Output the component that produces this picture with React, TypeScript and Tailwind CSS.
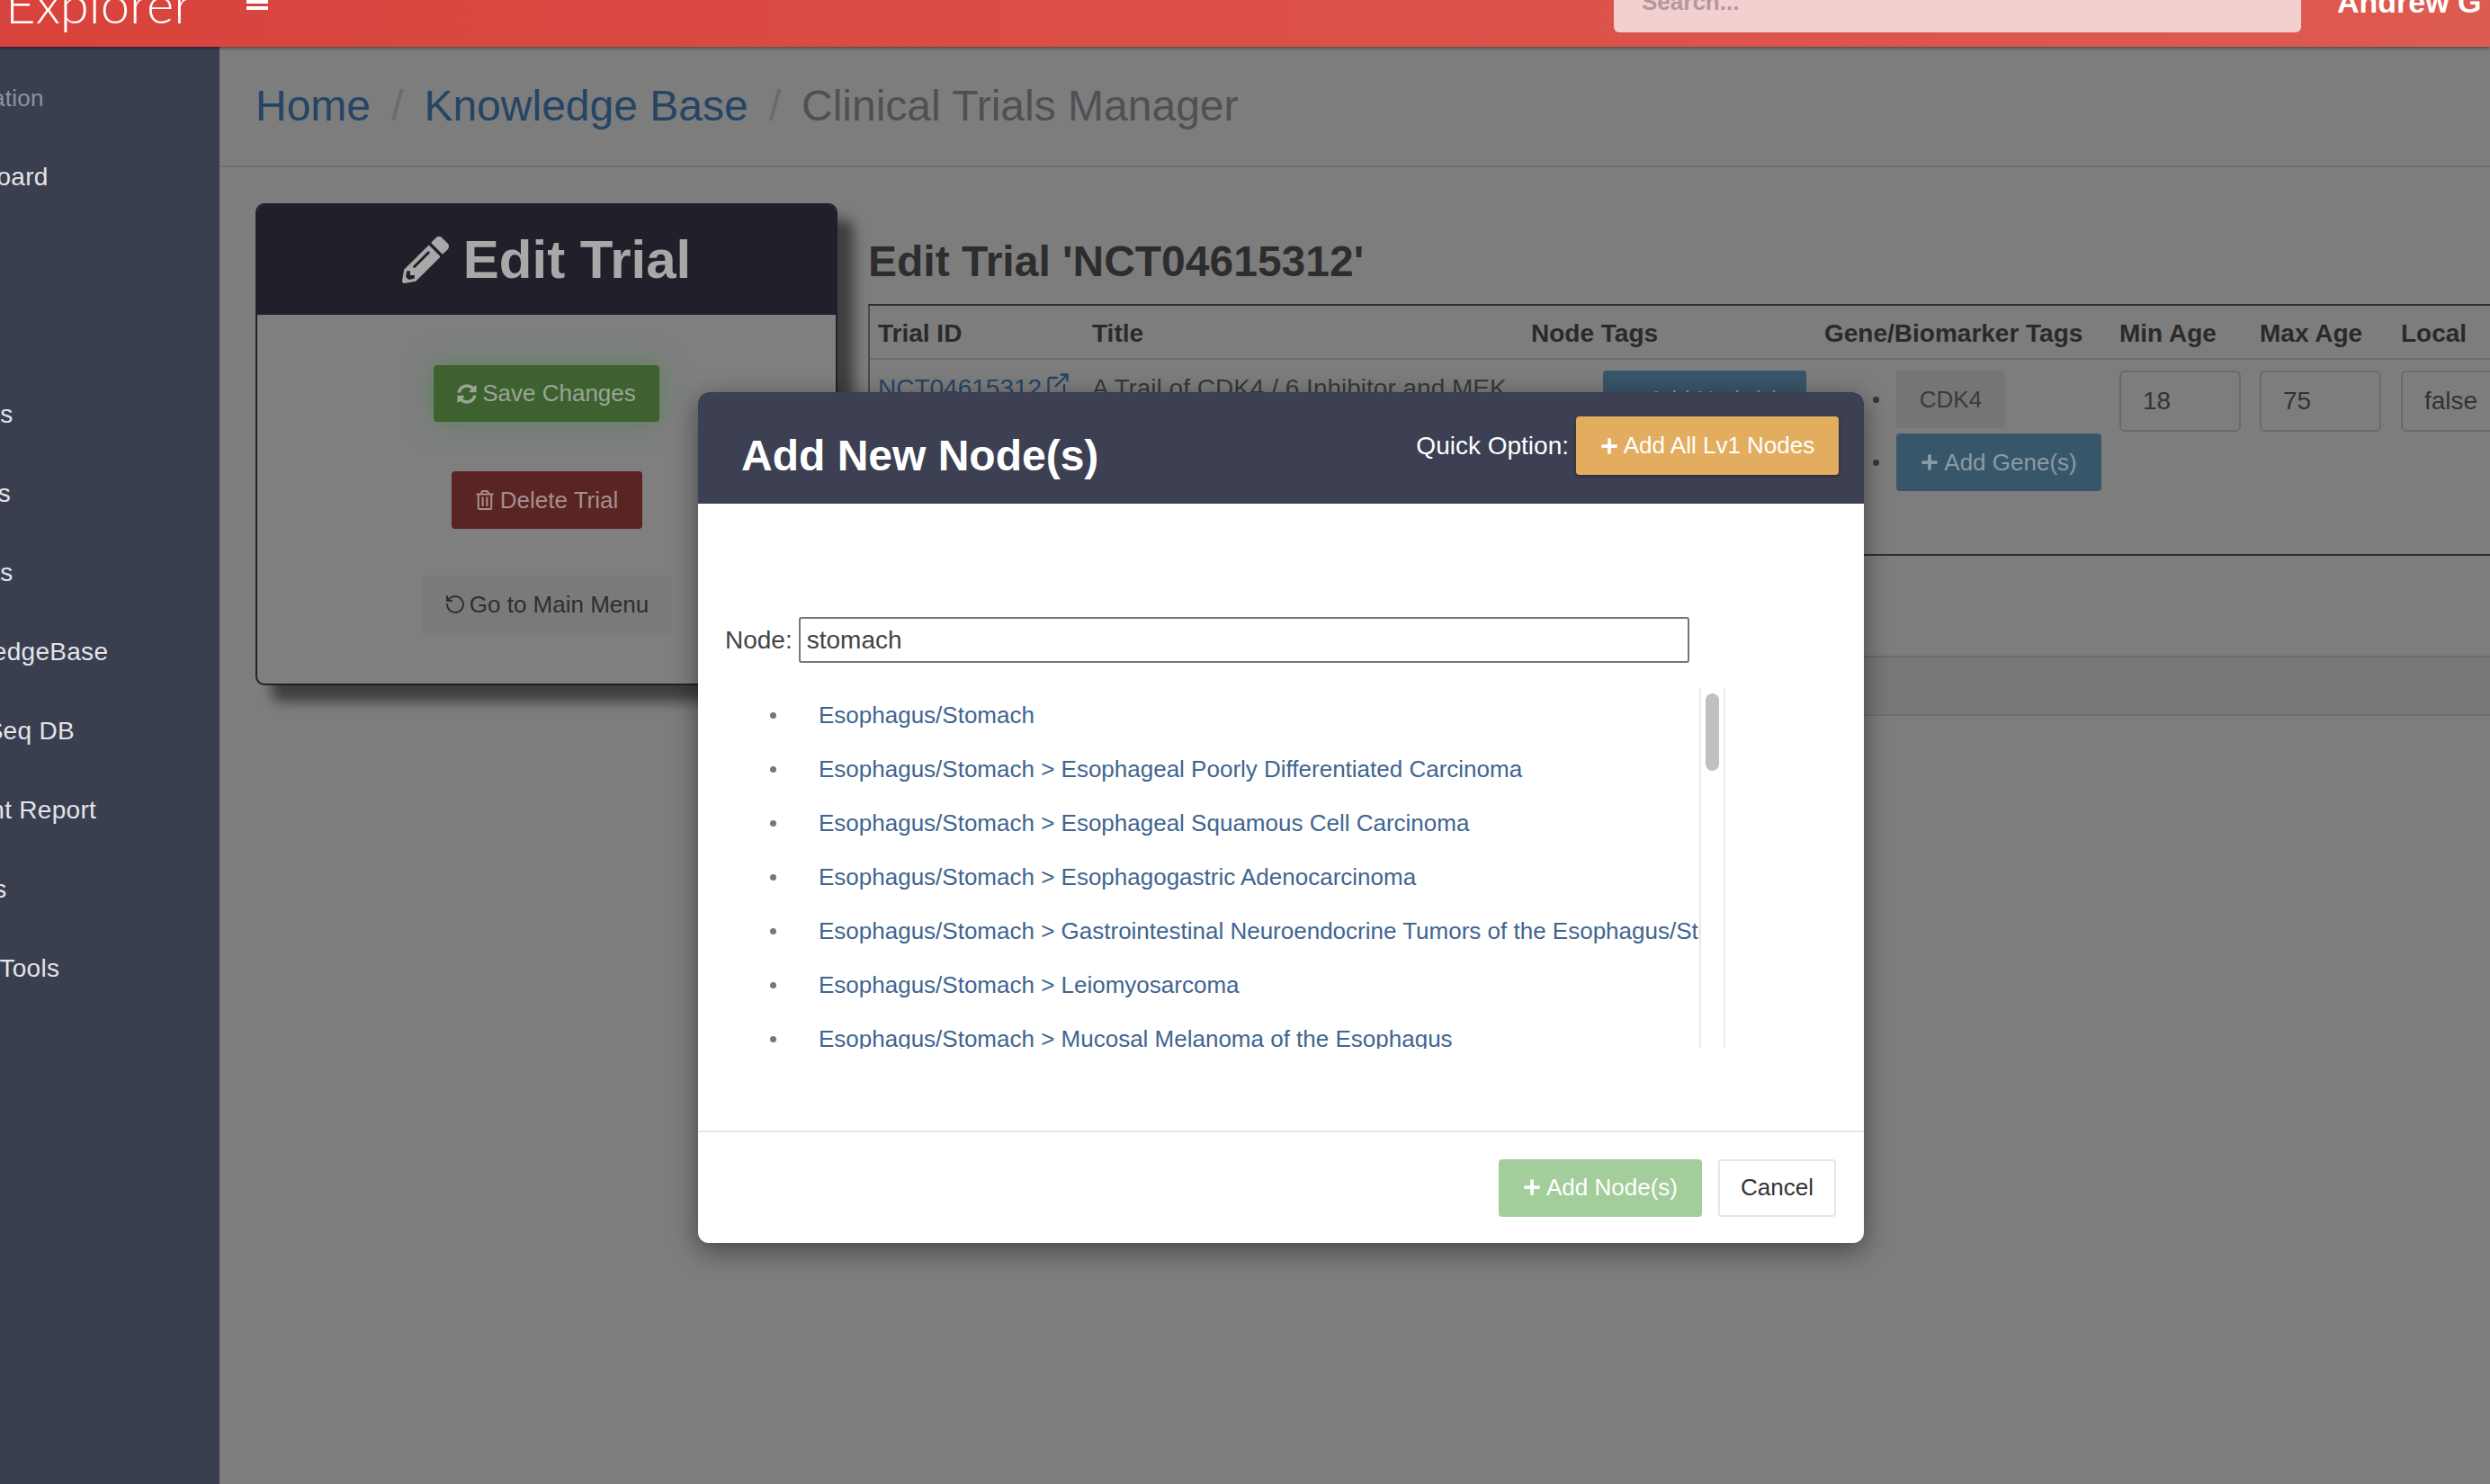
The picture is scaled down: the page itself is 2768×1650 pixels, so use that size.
import { ExternalLink, RotateCcw } from 'lucide-react'
import { FaPencilAlt, FaPlus, FaRegTrashAlt, FaSyncAlt } from 'react-icons/fa'

const NAV = [
  { label: 'Dashboard', className: 'mt-[40px] pl-[130px]' },
  { label: '', className: 'mt-[20px] pl-[130px]' },
  { label: '', className: 'mt-[20px] pl-[130px]' },
  { label: 'Patients', className: 'mt-[20px] pl-[127px]' },
  { label: 'Variants', className: 'mt-[20px] pl-[125px]' },
  { label: 'Projects', className: 'mt-[20px] pl-[127px]' },
  { label: 'KnowledgeBase', className: 'mt-[20px] pl-[130px]' },
  { label: 'RNA-Seq DB', className: 'mt-[20px] pl-[131px]' },
  { label: 'Patient Report', className: 'mt-[20px] pl-[140px]' },
  { label: 'Groups', className: 'mt-[20px] pl-[130px]' },
  { label: 'Admin Tools', className: 'mt-[20px] pl-[127px]' },
]

const NODES = [
  'Esophagus/Stomach',
  'Esophagus/Stomach > Esophageal Poorly Differentiated Carcinoma',
  'Esophagus/Stomach > Esophageal Squamous Cell Carcinoma',
  'Esophagus/Stomach > Esophagogastric Adenocarcinoma',
  'Esophagus/Stomach > Gastrointestinal Neuroendocrine Tumors of the Esophagus/Stomach',
  'Esophagus/Stomach > Leiomyosarcoma',
  'Esophagus/Stomach > Mucosal Melanoma of the Esophagus',
]

const COLUMNS = ['Trial ID', 'Title', 'Node Tags', 'Gene/Biomarker Tags', 'Min Age', 'Max Age', 'Local']

const GRID = 'grid grid-cols-[238px_488px_326px_328px_156px_157px_220px]'

function Bullet({ className }: { className: string }) {
  return <span className={`block w-[7px] h-[7px] rounded-full shrink-0 ${className}`} />
}

function AddNodeModal() {
  return (
    <div className="absolute left-[776px] top-[436px] w-[1296px] h-[946px] bg-white rounded-[12px] overflow-hidden shadow-[0_8px_30px_rgba(0,0,0,0.45)]">
      <div className="h-[124px] bg-[#3c4052] pl-[48px] pr-[28px] flex justify-between">
        <h2 className="text-[48px] leading-[55px] font-bold text-white pt-[43px] box-content">Add New Node(s)</h2>
        <div className="flex items-center gap-[8px] pt-[27px] self-start">
          <span className="text-[28px] text-white">Quick Option:</span>
          <button className="w-[292px] h-[65px] bg-[#e3ad60] rounded-[4px] text-white text-[26px] flex items-center justify-center gap-[6px] shadow-[0_2px_4px_rgba(0,0,0,0.35)]">
            <FaPlus className="w-[20px] h-[20px]" /> Add All Lv1 Nodes
          </button>
        </div>
      </div>

      <div className="h-[697px] pt-[126px] pl-[30px]">
        <div className="flex items-center gap-[7px]">
          <label className="text-[28px] text-[#444]">Node:</label>
          <div className="w-[990px] h-[51px] border-2 border-[#777] rounded-[3px] pl-[7px] flex items-center text-[28px] text-[#444]">stomach</div>
        </div>
        <div className="flex mt-[28px] h-[401px]">
          <ul className="w-[1083px] overflow-hidden">
            {NODES.map(node => (
              <li key={node} className="flex items-center h-[60px] pl-[50px] gap-[47px] whitespace-nowrap text-[26px] text-[#3f6590]">
                <Bullet className="bg-[#777]" />
                {node}
              </li>
            ))}
          </ul>
          <div className="w-[29px] border-x-2 border-[#eaeaea] px-[5px] pt-[6px]">
            <div className="h-[86px] bg-[#c1c1c1] rounded-full" />
          </div>
        </div>
      </div>

      <div className="h-[125px] border-t-2 border-[#e6e6e6] pt-[30px] pr-[31px] flex justify-end gap-[18px]">
        <button className="w-[226px] h-[64px] bg-[#a3cd9b] rounded-[4px] text-white text-[26px] flex items-center justify-center gap-[6px] pb-[2px]">
          <FaPlus className="w-[20px] h-[20px]" /> Add Node(s)
        </button>
        <button className="w-[131px] h-[64px] bg-white border-2 border-[#e6e6e6] rounded-[4px] text-[#333] text-[26px] pb-[2px]">Cancel</button>
      </div>
    </div>
  )
}

function TrialTable() {
  return (
    <div className="w-[1913px] border-t-2 border-[#2f2f2f] border-l-2 border-l-[#4a4a4b] text-[28px]">
      <div className={`${GRID} h-[60px] items-center border-b-2 border-[#6b6b6c] font-bold text-[#2a2a2a] pt-[3px]`}>
        {COLUMNS.map(col => (
          <div key={col} className="pl-[9px] whitespace-nowrap">{col}</div>
        ))}
      </div>
      <div className={`${GRID} h-[218px] border-b-2 border-[#2f2f2f] text-[#38383a]`}>
        <div className="pl-[9px] pt-[11px] flex items-start gap-[4px] text-[#264464] whitespace-nowrap">
          NCT04615312
          <ExternalLink className="w-[28px] h-[28px] mt-[2px]" />
        </div>
        <div className="pl-[9px] pt-[11px] whitespace-nowrap">A Trail of CDK4 / 6 Inhibitor and MEK</div>
        <div className="pl-[89px] pt-[12px]">
          <button className="w-[226px] h-[64px] bg-[#38566a] rounded-[4px] text-[#8a9ba4] text-[26px]">+ Add Node(s)</button>
        </div>
        <ul className="pl-[63px] pt-[12px] flex flex-col gap-[6px]">
          <li className="flex items-center gap-[19px]">
            <Bullet className="bg-[#38383a]" />
            <span className="w-[121px] h-[64px] bg-[#757576] rounded-[4px] flex items-center justify-center text-[26px] text-[#3a3a3b]">CDK4</span>
          </li>
          <li className="flex items-center gap-[19px]">
            <Bullet className="bg-[#38383a]" />
            <button className="w-[228px] h-[64px] bg-[#38566a] rounded-[4px] text-[#8a9ba4] text-[26px] flex items-center justify-center gap-[6px]">
              <FaPlus className="w-[20px] h-[20px]" /> Add Gene(s)
            </button>
          </li>
        </ul>
        {['18', '75', 'false'].map(value => (
          <div key={value} className="pl-[9px] pt-[12px]">
            <div className="w-[135px] h-[68px] border-2 border-[#6a6a6b] rounded-[6px] pl-[24px] flex items-center text-[#333]">{value}</div>
          </div>
        ))}
      </div>
      <div className="h-[113px] border-b-2 border-[#6b6b6c]" />
      <div className="h-[65px] border-b-2 border-[#6f6f70] bg-[#787879]" />
    </div>
  )
}

export default function App() {
  return (
    <div className="relative w-[2768px] h-[1650px] overflow-hidden font-['Liberation_Sans',Arial,sans-serif]">
      {/* the page is scrolled: the first 216px / 48px sit off screen */}
      <div className="w-[2984px] h-[1698px] -ml-[216px] -mt-[48px] flex flex-col">
        <header className="h-[100px] shrink-0 flex bg-gradient-to-r from-[#d8403a] to-[#de5b51] shadow-[0_2px_3px_rgba(0,0,0,0.35)] relative">
          <div className="w-[460px] pl-[222px] pt-[22px] text-[58px] leading-[60px] font-['Lato',sans-serif] font-light text-white whitespace-nowrap">Explorer</div>
          <div className="ml-[30px] w-[24px] pt-[41px] flex flex-col gap-[3px]">
            <span className="block h-[4px] bg-white" />
            <span className="block h-[4px] bg-white" />
            <span className="block h-[4px] bg-white" />
          </div>
          <div className="ml-auto mt-[16px] w-[764px] h-[68px] bg-[#f4cfcf] rounded-[6px] pl-[31px] flex items-center text-[26px] font-bold text-[#b3989c]">Search...</div>
          <div className="ml-[40px] w-[170px] flex items-center text-[34px] font-bold text-white whitespace-nowrap overflow-hidden">Andrew G</div>
        </header>

        <div className="flex-1 flex min-h-0">
          <aside className="w-[460px] shrink-0 bg-[#3a3f50] text-[28px] tracking-[0.3px] text-[#e3e4e8] pt-[43px]">
            <div className="pl-[139px] h-[28px] leading-[28px] text-[26px] text-[#8f93a0]">Navigation</div>
            {NAV.map((item, i) => (
              <div key={i} className={`h-[68px] leading-[68px] whitespace-nowrap ${item.className}`}>{item.label}</div>
            ))}
          </aside>

          <main className="flex-1 min-w-0 overflow-hidden bg-[#7d7d7e]">
            <nav className="h-[134px] border-b-2 border-[#6f6f70] pl-[40px] flex items-center gap-[23px] text-[48px] pb-[1px]">
              <span className="text-[#264464]">Home</span>
              <span className="text-[#6b6b6c]">/</span>
              <span className="text-[#264464]">Knowledge Base</span>
              <span className="text-[#6b6b6c]">/</span>
              <span className="text-[#505052]">Clinical Trials Manager</span>
            </nav>

            <div className="flex pl-[40px] pt-[40px]">
              <section className="w-[647px] h-[536px] shrink-0 border-2 border-[#1f2029] rounded-[10px] overflow-hidden bg-[#7f7f80] shadow-[18px_18px_14px_rgba(0,0,0,0.5)]">
                <div className="h-[122px] bg-[#1f2029] flex items-center justify-center gap-[16px] text-[60px] font-bold text-[#a8a8a8]">
                  <FaPencilAlt className="w-[52px] h-[52px]" /> Edit Trial
                </div>
                <div className="flex flex-col items-center pt-[56px]">
                  <button className="w-[251px] h-[63px] bg-[#3d6230] rounded-[4px] text-[26px] text-[#9aa597] flex items-center justify-center gap-[6px] shadow-[0_0_30px_rgba(70,130,60,0.6)]">
                    <FaSyncAlt className="w-[22px] h-[22px]" /> Save Changes
                  </button>
                  <button className="mt-[55px] w-[212px] h-[64px] bg-[#592422] rounded-[4px] text-[26px] text-[#a58f8e] flex items-center justify-center gap-[6px]">
                    <FaRegTrashAlt className="w-[22px] h-[22px]" /> Delete Trial
                  </button>
                  <button className="mt-[52px] w-[278px] h-[64px] bg-[#7a7a7b] rounded-[4px] text-[26px] text-[#2e2e2e] flex items-center justify-center gap-[4px]">
                    <RotateCcw className="w-[24px] h-[24px]" /> Go to Main Menu
                  </button>
                </div>
              </section>

              <section className="ml-[34px] shrink-0">
                <h1 className="mt-[37px] mb-[20px] text-[48px] leading-[55px] font-bold text-[#2d2d2e] whitespace-nowrap">Edit Trial 'NCT04615312'</h1>
                <TrialTable />
              </section>
            </div>
          </main>
        </div>
      </div>

      <AddNodeModal />
    </div>
  )
}
